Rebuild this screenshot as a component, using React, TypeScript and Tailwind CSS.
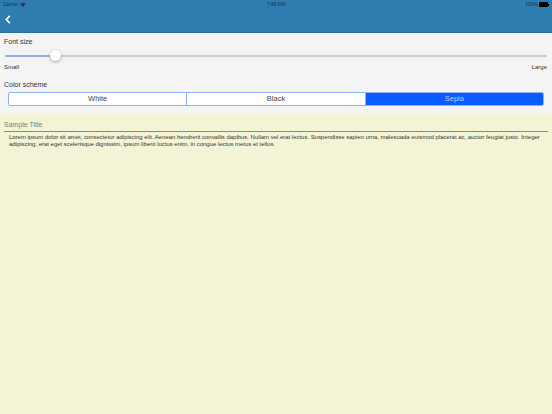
const FONT = "font-['Helvetica_Neue','Liberation_Sans',Arial,sans-serif]";

function Back() {
  return (
    <svg width="6" height="9" viewBox="0 0 6 9" fill="none" aria-hidden>
      <path d="M4.8 0.8 L1.3 4.5 L4.8 8.2" stroke="#fff" strokeWidth="1.7" />
    </svg>
  );
}

function Battery() {
  return (
    <span className="flex items-center">
      <span className="block h-[5px] w-[9px] rounded-[1px] bg-black" />
      <span className="block h-[2px] w-[1px] bg-black" />
    </span>
  );
}

function Wifi() {
  return (
    <svg width="6" height="4" viewBox="0 0 7 5" aria-hidden>
      <path d="M0 1.4 C2 -0.4 5 -0.4 7 1.4 L3.5 5 Z" fill="#2a3a45" />
    </svg>
  );
}

export default function App() {
  return (
    <div className={`${FONT} flex h-[414px] w-[552px] flex-col overflow-hidden bg-[#f3f3d6] text-[#333]`}>
      <header className="h-[33px] shrink-0 border-b border-[#2a6f9f] bg-[#2e7cb0]">
        <div className="grid h-[9px] grid-cols-3 items-center px-[3px] text-[5px] leading-[9px] text-[#1f3342]">
          <div className="flex items-center gap-[2px]">Carrier <Wifi /></div>
          <div className="text-center">7:48 PM</div>
          <div className="flex items-center justify-end gap-[1px]">100% <Battery /></div>
        </div>
        <div className="flex h-[20px] items-center pl-[5px]">
          <Back />
        </div>
      </header>

      <section className="h-[81px] shrink-0 bg-[#f4f4f4] px-[4px]">
        <div className="pt-[5px] text-[7px] leading-[8px]">Font size</div>
        <div className="relative mt-[9px] flex h-[2px] items-center pl-[1px] pr-[1px]">
          <div className="h-[2px] w-[50px] bg-[#8fb0e8]" />
          <div className="h-[2px] flex-1 bg-[#cccccc]" />
          <div className="absolute left-[46px] top-[-5px] size-[11px] rounded-full bg-white shadow-[0_1px_3px_rgba(0,0,0,0.35)]" />
        </div>
        <div className="mt-[6px] flex justify-between pr-[1px] text-[6px] leading-[8px]">
          <span>Small</span>
          <span>Large</span>
        </div>
        <div className="mt-[10px] text-[7px] leading-[8px]">Color scheme</div>
        <div className="mx-[4px] mt-[3px] flex h-[14px] w-[536px] overflow-hidden rounded-[2px] border border-[#8fb0f5] text-center text-[7.5px] leading-[12px]">
          <div className="flex-1 bg-white text-[#444]">White</div>
          <div className="flex-1 border-x border-[#8fb0f5] bg-white text-[#444]">Black</div>
          <div className="flex-1 bg-[#0a5cff] text-[#b9d0ff]">Sepia</div>
        </div>
      </section>

      <main className="flex-1 px-[4px]">
        <h1 className="border-b border-[#8a8a78] pb-[2px] pt-[6px] text-[7px] font-normal leading-[9px] text-[#808074]">Sample Title</h1>
        <p className="pl-[5px] pt-[2px] text-[5.95px] leading-[7px]">
          Lorem ipsum dolor sit amet, consectetur adipiscing elit. Aenean hendrerit convallis dapibus. Nullam vel erat lectus. Suspendisse sapien urna, malesuada euismod placerat ac, auctor feugiat justo. Integer adipiscing, erat eget scelerisque dignissim, ipsum libero luctus enim, in congue lectus metus et tellus.
        </p>
      </main>
    </div>
  );
}
